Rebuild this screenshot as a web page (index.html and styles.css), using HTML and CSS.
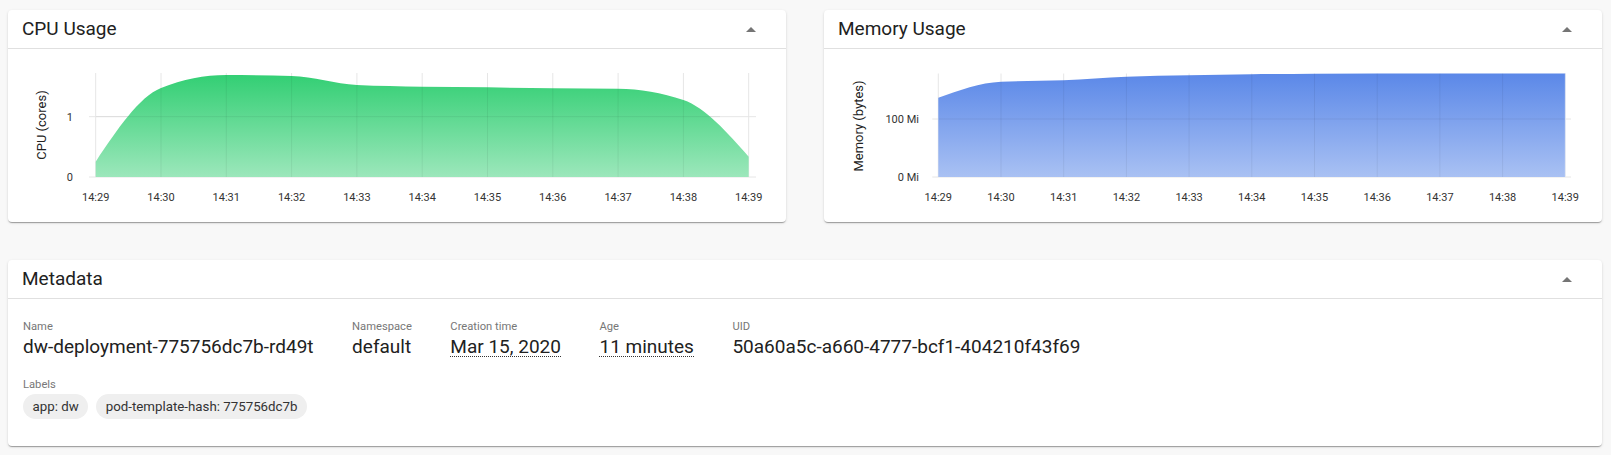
FILE: index.html
```html
<!DOCTYPE html>
<html>
<head>
<meta charset="utf-8">
<link rel="stylesheet" href="styles.css">
</head>
<body>
<div class="page">
  <div class="charts">
    <section class="card">
      <header class="card-header">
        <h2 class="card-title">CPU Usage</h2>
        <svg class="chevron" width="10" height="5" viewBox="0 0 10 5"><path d="M0 5 L5 0 L10 5 Z"/></svg>
      </header>
      <svg class="chart" viewBox="8 49 778 173" width="778" height="173">
        <defs>
          <linearGradient id="gGreen" x1="0" y1="0" x2="0" y2="1">
            <stop offset="0" stop-color="#33cf74"/>
            <stop offset="1" stop-color="#9ce7bb"/>
          </linearGradient>
        </defs>
        <g class="grid">
          <line x1="89" y1="116.7" x2="756" y2="116.7"/>
          <line x1="89" y1="177" x2="756" y2="177"/>
          <line x1="95.7" y1="73" x2="95.7" y2="177"/>
          <line x1="161" y1="73" x2="161" y2="177"/>
          <line x1="226.3" y1="73" x2="226.3" y2="177"/>
          <line x1="291.6" y1="73" x2="291.6" y2="177"/>
          <line x1="356.9" y1="73" x2="356.9" y2="177"/>
          <line x1="422.2" y1="73" x2="422.2" y2="177"/>
          <line x1="487.5" y1="73" x2="487.5" y2="177"/>
          <line x1="552.8" y1="73" x2="552.8" y2="177"/>
          <line x1="618.1" y1="73" x2="618.1" y2="177"/>
          <line x1="683.4" y1="73" x2="683.4" y2="177"/>
          <line x1="748.7" y1="73" x2="748.7" y2="177"/>
        </g>
        <path class="area" fill="url(#gGreen)" d="M95.7 161.7 C117.47 129.18 139.23 96.66 161 88 C182.77 79.34 204.53 75 226.3 75 C248.07 75 269.83 75.33 291.6 76 C313.37 76.67 335.13 83.87 356.9 85 C378.67 86.13 400.43 86.3 422.2 86.7 C443.97 87.1 465.73 86.9 487.5 87.3 C509.27 87.7 531.03 88.03 552.8 88.3 C574.57 88.57 596.33 88.43 618.1 88.7 C639.87 88.97 661.63 92.47 683.4 100 C705.17 107.53 726.93 132.13 748.7 156.7 L748.7 177 L95.7 177 Z"/>
        <g class="grid over">
          <line x1="161" y1="88" x2="161" y2="177"/>
          <line x1="226.3" y1="75" x2="226.3" y2="177"/>
          <line x1="291.6" y1="76" x2="291.6" y2="177"/>
          <line x1="356.9" y1="85" x2="356.9" y2="177"/>
          <line x1="422.2" y1="87" x2="422.2" y2="177"/>
          <line x1="487.5" y1="87.5" x2="487.5" y2="177"/>
          <line x1="552.8" y1="88.5" x2="552.8" y2="177"/>
          <line x1="618.1" y1="89" x2="618.1" y2="177"/>
          <line x1="683.4" y1="100" x2="683.4" y2="177"/>
          <line x1="96" y1="116.7" x2="720" y2="116.7"/>
        </g>
        <g class="ytick">
          <text x="73" y="121">1</text>
          <text x="73" y="181">0</text>
        </g>
        <text class="axis-label" transform="translate(46 125) rotate(-90)">CPU (cores)</text>
        <g class="xtick">
          <text x="95.7" y="201">14:29</text>
          <text x="161" y="201">14:30</text>
          <text x="226.3" y="201">14:31</text>
          <text x="291.6" y="201">14:32</text>
          <text x="356.9" y="201">14:33</text>
          <text x="422.2" y="201">14:34</text>
          <text x="487.5" y="201">14:35</text>
          <text x="552.8" y="201">14:36</text>
          <text x="618.1" y="201">14:37</text>
          <text x="683.4" y="201">14:38</text>
          <text x="748.7" y="201">14:39</text>
        </g>
      </svg>
    </section>

    <section class="card">
      <header class="card-header">
        <h2 class="card-title">Memory Usage</h2>
        <svg class="chevron" width="10" height="5" viewBox="0 0 10 5"><path d="M0 5 L5 0 L10 5 Z"/></svg>
      </header>
      <svg class="chart" viewBox="824 49 778 173" width="778" height="173">
        <defs>
          <linearGradient id="gBlue" x1="0" y1="0" x2="0" y2="1">
            <stop offset="0" stop-color="#5b88e8"/>
            <stop offset="1" stop-color="#a9c1f3"/>
          </linearGradient>
        </defs>
        <g class="grid">
          <line x1="932.3" y1="119" x2="1571" y2="119"/>
          <line x1="932.3" y1="177" x2="1571" y2="177"/>
          <line x1="938.3" y1="73.5" x2="938.3" y2="177"/>
          <line x1="1001" y1="73.5" x2="1001" y2="177"/>
          <line x1="1063.7" y1="73.5" x2="1063.7" y2="177"/>
          <line x1="1126.4" y1="73.5" x2="1126.4" y2="177"/>
          <line x1="1189.1" y1="73.5" x2="1189.1" y2="177"/>
          <line x1="1251.8" y1="73.5" x2="1251.8" y2="177"/>
          <line x1="1314.5" y1="73.5" x2="1314.5" y2="177"/>
          <line x1="1377.2" y1="73.5" x2="1377.2" y2="177"/>
          <line x1="1439.9" y1="73.5" x2="1439.9" y2="177"/>
          <line x1="1502.6" y1="73.5" x2="1502.6" y2="177"/>
          <line x1="1565.3" y1="73.5" x2="1565.3" y2="177"/>
        </g>
        <path class="area" fill="url(#gBlue)" d="M938.3 97.7 C959.2 90.18 980.1 82.63 1001 81.7 C1021.9 80.77 1042.8 81.13 1063.7 80.3 C1084.6 79.47 1105.5 77.54 1126.4 76.7 C1147.3 75.86 1168.2 75.7 1189.1 75.3 C1210 74.9 1230.9 74.55 1251.8 74.3 C1272.7 74.05 1293.6 73.92 1314.5 73.8 L1377.2 73.6 L1439.9 73.5 L1565.3 73.5 L1565.3 177 L938.3 177 Z"/>
        <g class="grid over">
          <line x1="1001" y1="82" x2="1001" y2="177"/>
          <line x1="1063.7" y1="80.5" x2="1063.7" y2="177"/>
          <line x1="1126.4" y1="77" x2="1126.4" y2="177"/>
          <line x1="1189.1" y1="75.5" x2="1189.1" y2="177"/>
          <line x1="1251.8" y1="74.5" x2="1251.8" y2="177"/>
          <line x1="1314.5" y1="74" x2="1314.5" y2="177"/>
          <line x1="1377.2" y1="74" x2="1377.2" y2="177"/>
          <line x1="1439.9" y1="74" x2="1439.9" y2="177"/>
          <line x1="1502.6" y1="74" x2="1502.6" y2="177"/>
          <line x1="939" y1="119" x2="1565" y2="119"/>
        </g>
        <line class="edge" x1="1565.3" y1="73.5" x2="1565.3" y2="177"/>
        <g class="ytick">
          <text x="919" y="123">100 Mi</text>
          <text x="919" y="181">0 Mi</text>
        </g>
        <text class="axis-label" transform="translate(863 126) rotate(-90)">Memory (bytes)</text>
        <g class="xtick">
          <text x="938.3" y="201">14:29</text>
          <text x="1001" y="201">14:30</text>
          <text x="1063.7" y="201">14:31</text>
          <text x="1126.4" y="201">14:32</text>
          <text x="1189.1" y="201">14:33</text>
          <text x="1251.8" y="201">14:34</text>
          <text x="1314.5" y="201">14:35</text>
          <text x="1377.2" y="201">14:36</text>
          <text x="1439.9" y="201">14:37</text>
          <text x="1502.6" y="201">14:38</text>
          <text x="1565.3" y="201">14:39</text>
        </g>
      </svg>
    </section>
  </div>

  <section class="card meta-card">
    <header class="card-header meta-header">
      <h2 class="card-title">Metadata</h2>
      <svg class="chevron" width="10" height="5" viewBox="0 0 10 5"><path d="M0 5 L5 0 L10 5 Z"/></svg>
    </header>
    <div class="meta-body">
      <div class="meta-row">
        <div class="field">
          <div class="field-label">Name</div>
          <div class="field-value">dw-deployment-775756dc7b-rd49t</div>
        </div>
        <div class="field">
          <div class="field-label">Namespace</div>
          <div class="field-value">default</div>
        </div>
        <div class="field">
          <div class="field-label">Creation time</div>
          <div class="field-value"><span class="dotted">Mar 15, 2020</span></div>
        </div>
        <div class="field">
          <div class="field-label">Age</div>
          <div class="field-value"><span class="dotted">11 minutes</span></div>
        </div>
        <div class="field">
          <div class="field-label">UID</div>
          <div class="field-value">50a60a5c-a660-4777-bcf1-404210f43f69</div>
        </div>
      </div>
      <div class="labels">
        <div class="field-label">Labels</div>
        <div class="chips">
          <span class="chip">app: dw</span>
          <span class="chip">pod-template-hash: 775756dc7b</span>
        </div>
      </div>
    </div>
  </section>
</div>
</body>
</html>
```

FILE: styles.css
```css
* { box-sizing: border-box; }

html, body {
  margin: 0;
  padding: 0;
  background: #f8f8f8;
  font-family: Roboto, "Noto Sans", "Liberation Sans", sans-serif;
  color: #212121;
}

.page {
  padding: 10px 9px 9px 8px;
}

.charts {
  display: grid;
  grid-template-columns: 1fr 1fr;
  gap: 38px;
}

.card {
  background: #fff;
  border-radius: 4px;
  box-shadow: 0 2px 1px -1px rgba(0,0,0,0.2), 0 1px 1px 0 rgba(0,0,0,0.14), 0 1px 3px 0 rgba(0,0,0,0.12);
  overflow: hidden;
}

.card-header {
  height: 39px;
  border-bottom: 1px solid #e0e0e0;
  display: flex;
  align-items: center;
  justify-content: space-between;
  padding: 0 30px 0 14px;
}

.card-title {
  margin: 0;
  font-size: 19px;
  font-weight: 400;
  color: #212121;
  line-height: 24px;
}

.chevron {
  display: block;
  fill: #757575;
}

.chart {
  display: block;
  width: 100%;
  height: 173px;
}

.grid line {
  stroke: #e6e6e6;
  stroke-width: 1;
}

.grid.over line {
  stroke: rgba(0, 0, 0, 0.06);
}

.edge {
  stroke: rgba(255, 255, 255, 0.45);
  stroke-width: 1;
}

.ytick text {
  font-size: 11px;
  fill: #333;
  text-anchor: end;
}

.xtick text {
  font-size: 11px;
  fill: #333;
  text-anchor: middle;
}

.axis-label {
  font-size: 13px;
  fill: #222;
  text-anchor: middle;
}

.meta-card {
  margin-top: 38px;
}

.meta-header {
  padding-left: 14px;
}

.meta-body {
  padding: 20px 15px 27px 15px;
}

.meta-row {
  display: flex;
  gap: 38.5px;
}

.field-label {
  font-size: 11.2px;
  line-height: 15px;
  color: #777;
}

.field-value {
  font-size: 19px;
  line-height: 25px;
  color: #212121;
}

.dotted {
  display: inline-block;
  line-height: 18px;
  border-bottom: 1px dotted #333;
}

.labels {
  margin-top: 18px;
}

.chips {
  display: flex;
  gap: 8px;
  margin-top: 2px;
}

.chip {
  display: inline-flex;
  align-items: center;
  height: 25px;
  padding: 0 9.5px;
  border-radius: 12.5px;
  background: #efefef;
  font-size: 13.3px;
  color: #333;
}
```
